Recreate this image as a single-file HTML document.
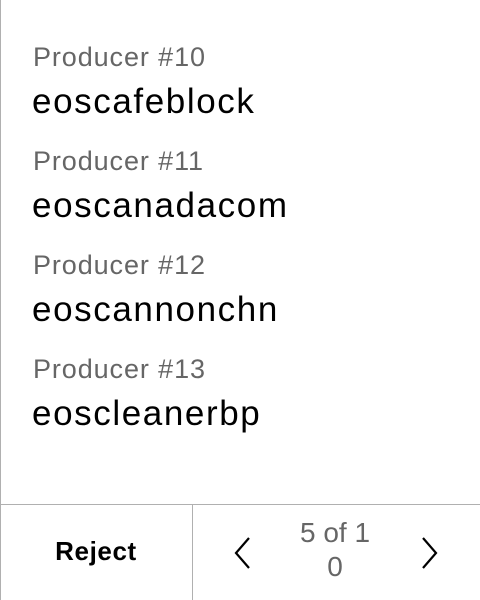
<!DOCTYPE html>
<html><head><style>
body{margin:0;width:480px;height:600px;background:#fff;font-family:"Liberation Sans",sans-serif;position:relative;overflow:hidden}
.l{position:absolute;left:0;top:0;width:1px;height:600px;background:#b0b0b0}
.lab{position:absolute;left:33px;font-size:27px;letter-spacing:0.9px;color:#666;line-height:30px}
.nm{position:absolute;left:32px;font-size:35px;letter-spacing:1.6px;color:#000;line-height:38px}
.h{position:absolute;left:0;top:504px;width:480px;height:1px;background:#b0b0b0}
.v{position:absolute;left:192px;top:504px;width:1px;height:96px;background:#b0b0b0}
</style></head><body>
<div class="l"></div>
<div class="lab" style="top:42px">Producer #10</div><div class="nm" style="top:83px">eoscafeblock</div>
<div class="lab" style="top:146px">Producer #11</div><div class="nm" style="top:187px">eoscanadacom</div>
<div class="lab" style="top:250px">Producer #12</div><div class="nm" style="top:291px">eoscannonchn</div>
<div class="lab" style="top:354px">Producer #13</div><div class="nm" style="top:395px">eoscleanerbp</div>
<div class="h"></div><div class="v"></div>
<div style="position:absolute;left:0;top:535px;width:192px;text-align:center;font-size:26px;letter-spacing:0.6px;font-weight:bold;line-height:32px">Reject</div>
<svg style="position:absolute;left:232px;top:536px" width="22" height="34"><path d="M17 2 L4 17 L17 32" fill="none" stroke="#000" stroke-width="2.2"/></svg>
<svg style="position:absolute;left:418px;top:536px" width="22" height="34"><path d="M5 2 L18 17 L5 32" fill="none" stroke="#000" stroke-width="2.2"/></svg>
<div style="position:absolute;left:285px;top:516px;width:100px;text-align:center;font-size:28px;color:#666;line-height:34px">5 of 1<br>0</div>
</body></html>
